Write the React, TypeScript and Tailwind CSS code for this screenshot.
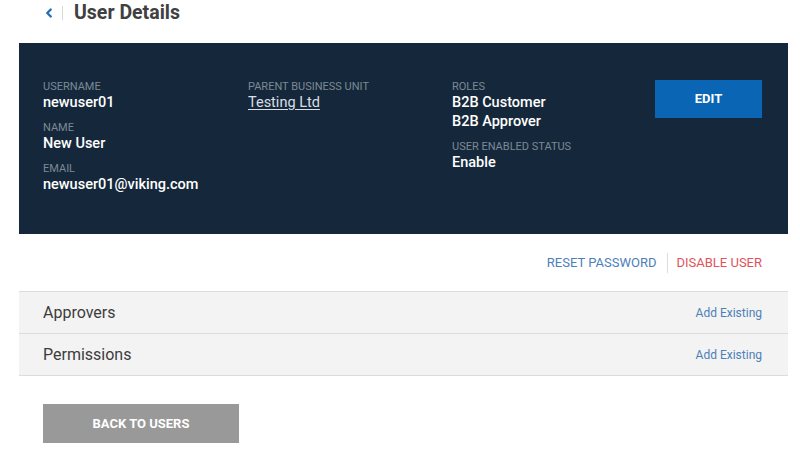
import { ChevronLeft } from "lucide-react";

const font = { fontFamily: "Roboto, 'Liberation Sans', sans-serif" };

function Field({ label, children }: { label: string; children: React.ReactNode }) {
  return (
    <div className="mb-[9px]">
      <div className="text-[11px] leading-[13px] uppercase text-[#7d8895]">{label}</div>
      <div className="text-[14.5px] leading-[19px] font-medium text-white">{children}</div>
    </div>
  );
}

export default function App() {
  return (
    <div className="w-[800px] h-[450px] bg-white overflow-hidden" style={font}>
      {/* Header */}
      <div className="flex items-center h-[25px] pl-[42px]">
        <ChevronLeft className="h-[14px] w-[14px] text-[#1f6fb5]" strokeWidth={4} />
        <div className="ml-[6px] mr-[11px] h-[14px] w-px bg-[#d8d8d8]" />
        <h1 className="text-[19.5px] font-bold text-[#404040] leading-[25px]">User Details</h1>
      </div>

      <div className="ml-[19px] w-[769px]">
        {/* Summary panel */}
        <div className="mt-[18px] h-[191px] bg-[#15283b] pl-6 pr-[26px] pt-[37px] flex">
          <div className="w-[205px]">
            <Field label="Username">newuser01</Field>
            <Field label="Name">New User</Field>
            <Field label="Email">newuser01@viking.com</Field>
          </div>
          <div className="w-[204px]">
            <Field label="Parent Business Unit">
              <span className="font-normal underline underline-offset-2 text-[#d9dfe5]">Testing Ltd</span>
            </Field>
          </div>
          <div className="flex-1">
            <Field label="Roles">
              <div>B2B Customer</div>
              <div>B2B Approver</div>
            </Field>
            <Field label="User Enabled Status">Enable</Field>
          </div>
          <div>
            <button className="w-[107px] h-[38px] bg-[#0a66b5] text-white text-[13px] font-bold">
              EDIT
            </button>
          </div>
        </div>

        {/* Actions */}
        <div className="flex justify-end items-center h-[57px] pr-[26px] text-[13px]">
          <span className="text-[#4d7fb8]">RESET PASSWORD</span>
          <span className="ml-[11px] mr-[8px] h-[20px] w-px bg-[#dcdcdc]" />
          <span className="text-[#e0535b]">DISABLE USER</span>
        </div>

        {/* Sections */}
        <div className="border-t border-[#dcdcdc]">
          {["Approvers", "Permissions"].map((s) => (
            <div
              key={s}
              className="flex items-center justify-between h-[42px] bg-[#f3f3f3] border-b border-[#dcdcdc] pl-6 pr-[26px]"
            >
              <span className="text-[16px] text-[#3c3c3c]">{s}</span>
              <span className="text-[12px] text-[#4d7fb8]">Add Existing</span>
            </div>
          ))}
        </div>

        <div className="pl-6 pt-[28px]">
          <button className="w-[196px] h-[39px] bg-[#999999] text-white text-[13px] font-bold">
            BACK TO USERS
          </button>
        </div>
      </div>
    </div>
  );
}
